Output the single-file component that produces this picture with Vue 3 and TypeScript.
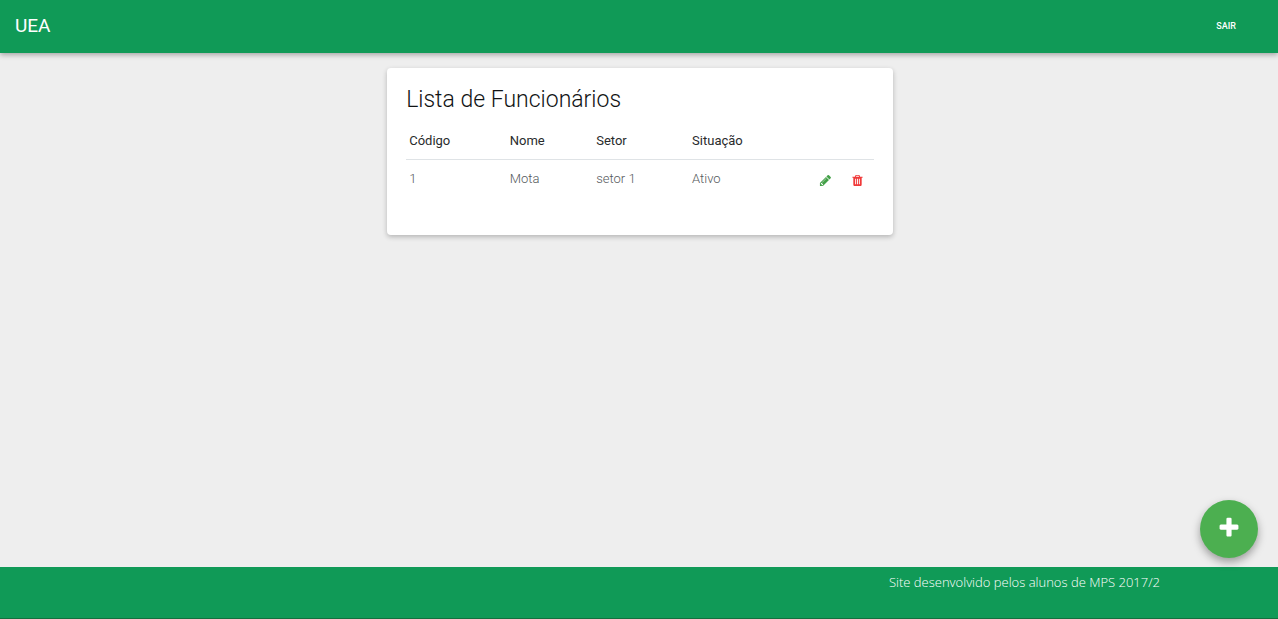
<script setup lang="ts">
import { ref } from 'vue'

interface Employee {
  id: number
  name: string
  sector: string
  status: string
}

const employees = ref<Employee[]>([
  { id: 1, name: 'Mota', sector: 'setor 1', status: 'Ativo' },
])
</script>

<template>
  <div class="page">
    <header class="navbar">
      <a class="brand" href="#">UEA</a>
      <button class="logout" type="button">SAIR</button>
    </header>

    <main class="content">
      <section class="card">
        <h1 class="title">Lista de Funcionários</h1>
        <table class="table">
          <colgroup>
            <col class="col-code" />
            <col class="col-name" />
            <col class="col-sector" />
            <col class="col-status" />
            <col />
          </colgroup>
          <thead>
            <tr>
              <th scope="col">Código</th>
              <th scope="col">Nome</th>
              <th scope="col">Setor</th>
              <th scope="col">Situação</th>
              <td></td>
            </tr>
          </thead>
          <tbody>
            <tr v-for="employee in employees" :key="employee.id">
              <td>{{ employee.id }}</td>
              <td>{{ employee.name }}</td>
              <td>{{ employee.sector }}</td>
              <td>{{ employee.status }}</td>
              <td>
                <div class="actions">
                  <button class="action edit" type="button" aria-label="Editar">
                    <svg viewBox="0 0 1792 1792" aria-hidden="true">
                      <path d="M491 1536l91-91-235-235-91 91v107h128v128h107zm523-928q0-22-22-22-10 0-17 7l-542 542q-7 7-7 17 0 22 22 22 10 0 17-7l542-542q7-7 7-17zm-54-192l416 416-832 832h-416v-416zm683 96q0 53-37 90l-166 166-416-416 166-165q36-38 90-38 53 0 91 38l235 234q37 39 37 91z" />
                    </svg>
                  </button>
                  <button class="action remove" type="button" aria-label="Excluir">
                    <svg viewBox="0 0 1792 1792" aria-hidden="true">
                      <path d="M704 1376v-704q0-14-9-23t-23-9h-64q-14 0-23 9t-9 23v704q0 14 9 23t23 9h64q14 0 23-9t9-23zm256 0v-704q0-14-9-23t-23-9h-64q-14 0-23 9t-9 23v704q0 14 9 23t23 9h64q14 0 23-9t9-23zm256 0v-704q0-14-9-23t-23-9h-64q-14 0-23 9t-9 23v704q0 14 9 23t23 9h64q14 0 23-9t9-23zm-544-992h448l-48-117q-7-9-17-11h-317q-10 2-17 11zm928 32v64q0 14-9 23t-23 9h-96v948q0 83-47 143.500t-113 60.500h-832q-66 0-113-58.500t-47-141.500v-952h-96q-14 0-23-9t-9-23v-64q0-14 9-23t23-9h309l70-167q15-37 54-63t79-26h320q40 0 79 26t54 63l70 167h309q14 0 23 9t9 23z" />
                    </svg>
                  </button>
                </div>
              </td>
            </tr>
          </tbody>
        </table>
      </section>
    </main>

    <button class="fab" type="button" aria-label="Adicionar funcionário">
      <svg viewBox="0 0 1792 1792" aria-hidden="true">
        <path d="M1600 736v192q0 40-28 68t-68 28h-416v416q0 40-28 68t-68 28h-192q-40 0-68-28t-28-68v-416h-416q-40 0-68-28t-28-68v-192q0-40 28-68t68-28h416v-416q0-40 28-68t68-28h192q40 0 68 28t28 68v416h416q40 0 68 28t28 68z" />
      </svg>
    </button>

    <footer class="footer">
      <p>Site desenvolvido pelos alunos de MPS 2017/2</p>
    </footer>
  </div>
</template>

<style>
body {
  margin: 0;
  background: #eee;
}
</style>

<style scoped>
.page {
  display: flex;
  flex-direction: column;
  min-height: 100vh;
  font-family: Roboto, "Liberation Sans", sans-serif;
  color: #292b2c;
}

button {
  padding: 0;
  border: 0;
  background: none;
  font-family: inherit;
  cursor: pointer;
}

svg {
  display: block;
  fill: currentColor;
}

.navbar {
  display: flex;
  align-items: center;
  justify-content: space-between;
  box-sizing: border-box;
  height: 53px;
  padding: 0 42px 2px 15px;
  background: #109a57;
  box-shadow: 0 2px 5px rgba(0, 0, 0, 0.3);
}

.brand {
  color: #fff;
  font-size: 19px;
  line-height: 28px;
  text-decoration: none;
}

.logout {
  color: #fff;
  font-size: 9px;
  font-weight: 500;
  line-height: 16px;
}

.content {
  flex: 1;
  padding: 15px 0 15px 2px;
}

.card {
  box-sizing: border-box;
  width: calc(100% * 5 / 12 - 26px);
  margin: 0 auto;
  padding: 18px 19px 36px;
  border-radius: 4px;
  background: #fff;
  box-shadow: 0 2px 5px rgba(0, 0, 0, 0.24);
}

.title {
  margin: 0 0 8px;
  color: #111314;
  font-size: 23px;
  font-weight: 300;
  line-height: 28px;
}

.table {
  width: 100%;
  border-collapse: collapse;
  table-layout: fixed;
  font-size: 13px;
  line-height: 20px;
}

.col-code {
  width: 21.5%;
}

.col-name {
  width: 18.5%;
}

.col-sector {
  width: 20.5%;
}

.col-status {
  width: 19.5%;
}

th,
td {
  padding: 9px 3px 8px;
  font-weight: 400;
  text-align: left;
}

thead tr {
  border-bottom: 1px solid #dfe3e6;
}

tbody td {
  padding-bottom: 10px;
  font-weight: 300;
  color: #55595c;
}

.actions {
  display: flex;
  justify-content: flex-end;
  gap: 19px;
  padding: 2px 7px 0 0;
}

.action svg {
  width: 13px;
  height: 13px;
}

.edit {
  color: #43a047;
}

.remove {
  color: #f03a3a;
}

.fab {
  position: fixed;
  right: 20px;
  bottom: 61px;
  display: flex;
  align-items: center;
  justify-content: center;
  width: 58px;
  height: 58px;
  padding-bottom: 2px;
  border-radius: 50%;
  background: #4caf50;
  color: #fff;
  box-shadow: 0 4px 8px rgba(0, 0, 0, 0.35);
}

.fab svg {
  width: 24px;
  height: 24px;
}

.footer {
  box-sizing: border-box;
  min-height: 52px;
  padding: 4px 118px 0 15px;
  border-bottom: 1px solid #14703f;
  background: #109a57;
}

.footer p {
  margin: 0;
  color: #fff;
  font-family: "Open Sans", "Noto Sans", sans-serif;
  font-size: 13px;
  font-weight: 300;
  line-height: 22px;
  text-align: right;
}
</style>
